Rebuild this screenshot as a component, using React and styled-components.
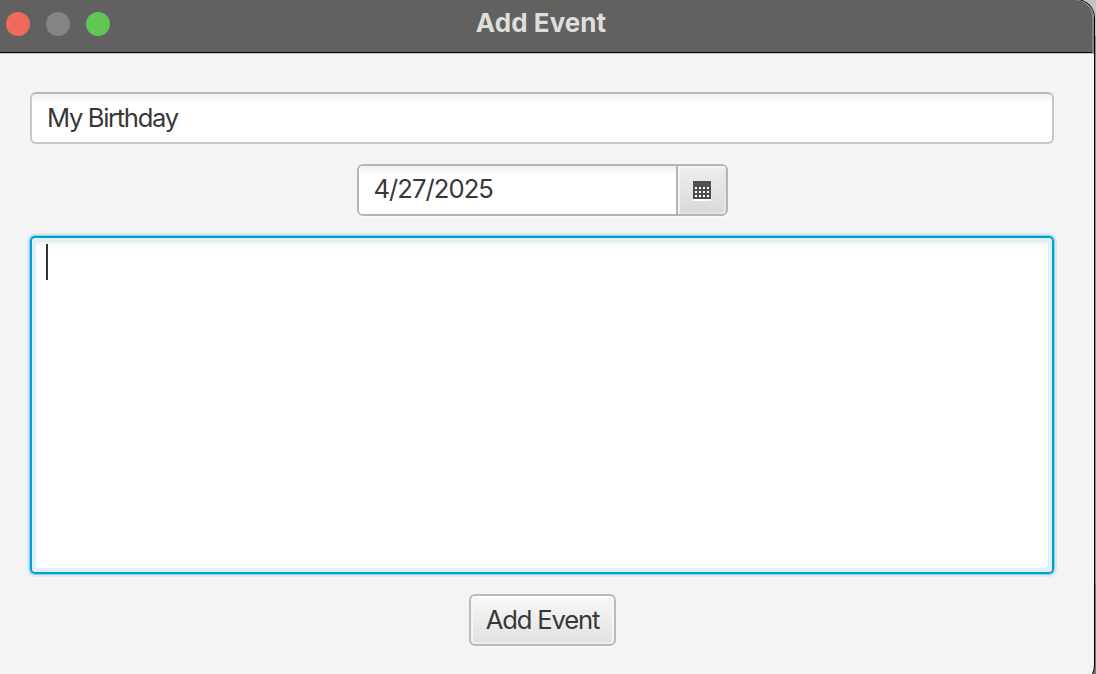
import React from "react";
import styled, { createGlobalStyle } from "styled-components";

const GlobalStyle = createGlobalStyle`
  * { box-sizing: border-box; }
  body {
    margin: 0;
    overflow: hidden;
    background: #8f8f8f;
    font-family: Inter, "Liberation Sans", sans-serif;
  }
`;

const Desktop = styled.div`
  width: 1096px;
  height: 674px;
  overflow: hidden;
  background: linear-gradient(#c4c4c4 0 36px, #8c8c8c 36px 584px, #777 584px);
`;

const Window = styled.div`
  display: flex;
  flex-direction: column;
  width: 1094px;
  height: 685px;
  background: #f4f4f4;
  border-radius: 0 18px 20px 0;
  box-shadow: 0 0 0 1px #000;
  overflow: hidden;
`;

const TitleBar = styled.header`
  display: grid;
  grid-template-columns: 1fr auto 1fr;
  height: 54px;
  flex: none;
  padding: 0 16px 0 6px;
  background: #61615f;
  border-right: 2px solid #858584;
  border-bottom: 1px solid #c9c9c9;
  border-top-right-radius: 18px;
  box-shadow: inset 0 -1px #000;
`;

const Controls = styled.div`
  display: flex;
  gap: 16px;
  padding-top: 12px;
`;

const Light = styled.span`
  width: 24px;
  height: 24px;
  border-radius: 50%;
  background: ${({ $color }) => $color};
`;

const Title = styled.h1`
  margin: 0;
  padding-top: 7px;
  font-size: 26px;
  line-height: 32px;
  font-weight: 700;
  letter-spacing: 0.05px;
  color: #dededd;
  white-space: nowrap;
`;

const Form = styled.main`
  display: flex;
  flex-direction: column;
  align-items: center;
  gap: 20px;
  width: 1024px;
  margin: 38px 0 0 30px;
`;

const TextField = styled.div`
  width: 1024px;
  height: 52px;
  padding: 8px 15px;
  border: 2px solid #c7c7c7;
  border-top-color: #b8b8b8;
  border-radius: 6px;
  background: linear-gradient(#f0f0f0, #fff 9px);
  color: #383838;
  font-size: 25.6px;
  line-height: 32px;
  letter-spacing: -1.33px;
`;

const DatePicker = styled.div`
  display: flex;
  width: 371px;
  height: 52px;
  border: 2px solid #b5b5b5;
  border-radius: 6px;
  overflow: hidden;
  background: #fff;
  box-shadow: 0 2px #f9f9f9;
`;

const DateText = styled.div`
  flex: 1;
  padding: 7px 15px;
  background: linear-gradient(#f0f0f0, #fff 9px);
  color: #383838;
  font-size: 25.6px;
  line-height: 32px;
  letter-spacing: -0.95px;
`;

const DateButton = styled.button`
  display: flex;
  align-items: flex-start;
  width: 50px;
  padding: 15px 0 0 15px;
  border: 0;
  border-left: 2px solid #b5b5b5;
  background: linear-gradient(#eee, #d9d9d9);
  box-shadow: inset 2px 2px #f4f4f4, inset -2px -2px #e4e4e4;
`;

const TextArea = styled.div`
  width: 1024px;
  height: 338px;
  padding: 6px 14px;
  border: 2px solid #039ed3;
  border-radius: 5px;
  background: linear-gradient(#f3f3f3 4px, #fff 10px);
  box-shadow: inset 0 0 0 4px #def1f8, 0 0 0 1px #8ccfe6, 0 0 0 3px #d9eaf0;
`;

const Caret = styled.div`
  width: 2px;
  height: 36px;
  background: #323232;
`;

const SubmitButton = styled.button`
  width: 147px;
  height: 52px;
  padding: 0 0 0 1px;
  border: 2px solid #bababa;
  border-radius: 6px;
  background: linear-gradient(#f8f8f8, #e1e1e1);
  box-shadow: inset 0 2px #fff, inset 2px 0 #f6f6f6, inset -2px 0 #f6f6f6, inset 0 -2px #ececec, 0 2px #f8f8f8;
  color: #383838;
  font-family: inherit;
  font-size: 25.6px;
  line-height: 32px;
  letter-spacing: -1.18px;
  white-space: nowrap;
`;

function CalendarIcon() {
  return (
    <svg width="18" height="20" viewBox="0 0 18 20" shapeRendering="crispEdges" aria-hidden="true">
      <path fill="#fff" d="M0 18h18v2H0z" />
      <path fill="#505050" d="M0 0h18v18H0z" />
      {[6, 10, 14].map((y) =>
        [2, 6, 10, 14].map((x) => (
          <rect key={`${x}-${y}`} x={x} y={y} width="2" height="2" fill="#fff" />
        ))
      )}
    </svg>
  );
}

export default function App() {
  return (
    <Desktop>
      <GlobalStyle />
      <Window>
        <TitleBar>
          <Controls>
            <Light $color="#ee6a5f" />
            <Light $color="#858583" />
            <Light $color="#61c655" />
          </Controls>
          <Title>Add Event</Title>
        </TitleBar>
        <Form>
          <TextField>My Birthday</TextField>
          <DatePicker>
            <DateText>4/27/2025</DateText>
            <DateButton aria-label="Choose date">
              <CalendarIcon />
            </DateButton>
          </DatePicker>
          <TextArea>
            <Caret />
          </TextArea>
          <SubmitButton>Add Event</SubmitButton>
        </Form>
      </Window>
    </Desktop>
  );
}
